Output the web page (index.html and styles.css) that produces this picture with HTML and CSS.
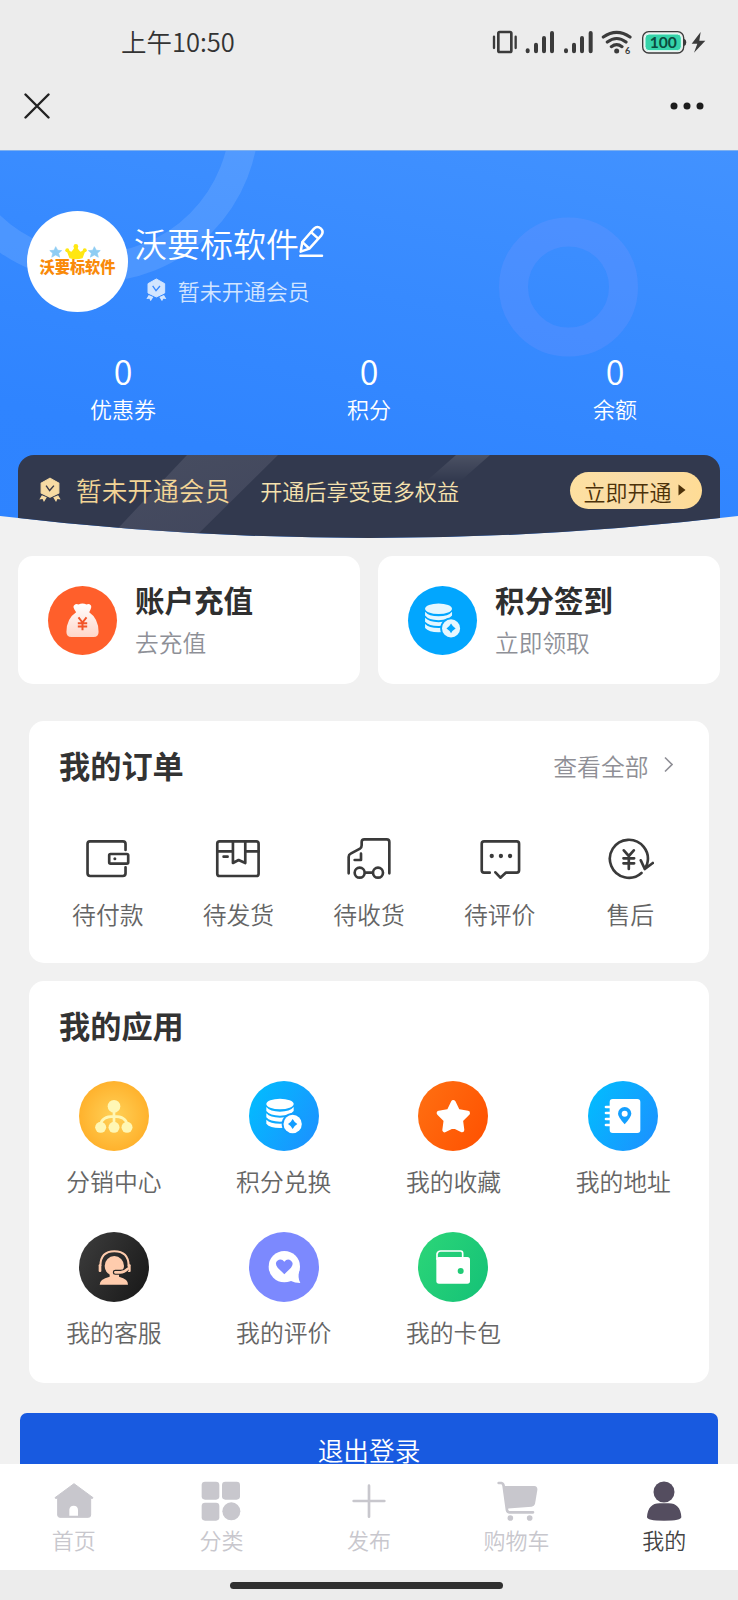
FILE: index.html
```html
<!DOCTYPE html>
<html lang="zh-CN">
<head>
<meta charset="utf-8">
<title>我的</title>
<link rel="stylesheet" href="styles.css">
</head>
<body>
<svg class="defs" width="0" height="0">
  <symbol id="badge" viewBox="436 388 62 70">
    <path fill="currentColor" stroke="currentColor" stroke-width="3" stroke-linejoin="round" d="M467 391L492 405V433L467 445L442 433V405Z"/>
    <path fill="currentColor" d="M444 439L437 451L446 450L450 458L458 445ZM490 439L497 451L488 450L484 458L476 445Z"/>
    <path class="badge-check" d="M456 412L466 426L478 412"/>
  </symbol>
  <symbol id="coins" viewBox="687 333 210 210">
    <g fill="currentColor">
      <ellipse cx="780" cy="402" rx="41" ry="16"/>
      <path d="M739 411Q750 425 780 425Q810 425 821 411V423Q810 437 780 437Q750 437 739 423Z"/>
      <path d="M739 430Q750 443 780 443Q810 443 821 430V442Q810 455 780 455Q750 455 739 442Z"/>
      <path d="M739 449Q750 461 780 461Q810 461 821 449V461Q810 474 780 474Q750 474 739 461Z"/>
    </g>
    <circle class="coin-gap" cx="818" cy="462" r="33"/>
    <circle cx="818" cy="462" r="27.500" fill="currentColor"/>
    <path class="coin-gap" d="M818 447Q823 457 832 462Q823 467 818 477Q813 467 804 462Q813 457 818 447Z"/>
  </symbol>
</svg>

<div class="screen">
  <div class="status-bar">
    <span class="time">上午10:50</span>
    <svg class="status-icons" width="220" height="28" viewBox="30 24 660 84">
      <g fill="none" stroke="#3b3b3b" stroke-linecap="round">
        <rect x="55" y="36" width="39" height="60" rx="4" stroke-width="8"/>
        <path stroke-width="7" d="M42 50V84M107 50V84"/>
        <path stroke-width="12" d="M143 91V94M168 74V94M192 54V94M216 39V94M258 91V94M282 74V94M306 54V94M332 39V94"/>
        <path stroke-width="9.500" d="M370 51Q410 23 450 51M382 66Q410 45 438 66M394 80Q410 68 426 80"/>
        <rect x="488" y="35" width="123" height="64" rx="18" stroke-width="4"/>
      </g>
      <circle cx="410" cy="93" r="7.500" fill="#3b3b3b"/>
      <text class="wifi-gen" x="443" y="102">6</text>
      <path fill="#3b3b3b" d="M612 56Q619 58 619 67Q619 76 612 78ZM662 36L635 71H652L642 98L676 62H658Z"/>
      <rect x="495" y="42" width="109" height="50" rx="12" fill="#35d3a9" stroke="#e3fff7" stroke-width="3"/>
      <text class="battery-text" x="550" y="84">100</text>
    </svg>
  </div>
  <div class="title-bar">
    <svg width="26" height="26" viewBox="0 0 26 26"><path fill="none" stroke="#222" stroke-width="2.400" stroke-linecap="round" d="M1.500 1.500L24.500 24.500M24.500 1.500L1.500 24.500"/></svg>
    <svg width="34" height="8" viewBox="0 0 34 8" fill="#1c1c1c"><circle cx="4" cy="4" r="3.500"/><circle cx="17" cy="4" r="3.500"/><circle cx="30" cy="4" r="3.500"/></svg>
  </div>

  <main class="content">
    <section class="hero">
      <svg class="hero-rings" width="738" height="388" viewBox="0 0 738 388" fill="none">
        <circle cx="94" cy="-34" r="150.500" stroke="#fff" stroke-opacity=".11" stroke-width="29"/>
        <circle cx="568.500" cy="136" r="55" stroke="#8a9cff" stroke-opacity=".2" stroke-width="29"/>
      </svg>
      <div class="profile">
        <div class="avatar">
          <svg width="101" height="101" viewBox="81 181 306 306">
            <g fill="#8fcdf3" stroke="#8fcdf3" stroke-width="2" stroke-linejoin="round">
              <path d="M168 289L174 300L186 301L177 309L180 321L168 314L156 321L159 309L150 301L163 300Z"/>
              <path d="M285 289L291 300L303 301L294 309L297 321L285 314L273 321L276 309L267 301L280 300Z"/>
            </g>
            <path fill="#ffe712" stroke="#ffe712" stroke-width="4" stroke-linejoin="round" d="M203 301L216 307L225 296V289H233V296L242 307L256 301L248 322Q229 328 211 322Z"/>
            <circle cx="229" cy="288" r="7" fill="#ffe712"/><circle cx="203" cy="300" r="6" fill="#ffe712"/><circle cx="256" cy="300" r="6" fill="#ffe712"/>
            <text class="logo-text" x="234" y="370" textLength="230" lengthAdjust="spacingAndGlyphs">沃要标软件</text>
          </svg>
        </div>
        <div class="profile-info">
          <div class="name-row">
            <span class="name">沃要标软件</span>
            <svg class="pencil" width="27" height="35" viewBox="895 222 81 105" fill="none" stroke="#fff" stroke-width="7.500" stroke-linecap="round" stroke-linejoin="round">
              <path d="M903 305L908 276L943 236Q953 226 964 236Q973 245 965 256L929 296Z"/>
              <path d="M935 247L955 265M909 277L927 294M902 317H967"/>
            </svg>
          </div>
          <div class="level-row">
            <svg class="badge badge-light" width="20.700" height="23.300"><use href="#badge"/></svg>
            <span>暂未开通会员</span>
          </div>
        </div>
      </div>
      <div class="stats">
        <div class="stat"><b>0</b><span>优惠券</span></div>
        <div class="stat"><b>0</b><span>积分</span></div>
        <div class="stat"><b>0</b><span>余额</span></div>
      </div>
      <div class="member-bar">
        <svg class="badge badge-gold" width="22" height="25"><use href="#badge"/></svg>
        <span class="member-title">暂未开通会员</span>
        <span class="member-desc">开通后享受更多权益</span>
        <span class="open-btn">立即开通<svg width="8" height="12" viewBox="0 0 8 12"><path fill="#4c3108" d="M0.500 0.500L7.500 6L0.500 11.500Z"/></svg></span>
      </div>
    </section>

    <section class="quick">
      <div class="quick-card">
        <div class="quick-icon red">
          <svg width="69" height="69" viewBox="143 438 206 206">
            <defs><linearGradient id="bag" x1="0" y1="0" x2="0" y2="1"><stop offset="0" stop-color="#fff"/><stop offset="1" stop-color="#ffd6c9"/></linearGradient></defs>
            <path fill="url(#bag)" d="M222 495Q226 490 234 493Q246 487 258 493Q266 490 270 495Q276 500 266 516Q294 535 294 575Q294 590 279 590H213Q198 590 198 575Q198 535 227 516Q214 500 222 495Z"/>
            <path fill="none" stroke="#f2562a" stroke-width="6" d="M234 532L246 547L258 532M246 547V570M232 549H260M232 559H260"/>
          </svg>
        </div>
        <div><h3>账户充值</h3><p>去充值</p></div>
      </div>
      <div class="quick-card">
        <div class="quick-icon blue"><svg class="coins" width="69" height="69"><use href="#coins"/></svg></div>
        <div><h3>积分签到</h3><p>立即领取</p></div>
      </div>
    </section>

    <section class="panel orders">
      <header><h2>我的订单</h2><a class="more">查看全部<svg width="9" height="17" viewBox="0 0 9 17"><path fill="none" stroke="#8f8f96" stroke-width="1.600" d="M1 1.500L8 8.500L1 15.500"/></svg></a></header>
      <div class="order-grid">
        <div class="order"><svg width="48" height="44" viewBox="191.400 381 144 132"><path d="M316 420V402Q316 394 308 394H209Q202 394 202 402V490Q202 498 210 498H308Q316 498 316 490V472"/><rect x="267" y="432" width="57" height="29" rx="4"/><circle class="dot" cx="284" cy="446" r="4.500"/></svg><span>待付款</span></div>
        <div class="order"><svg width="48" height="44" viewBox="583.200 381 144 132"><rect x="593" y="394" width="124" height="104" rx="7"/><path d="M593 424H640M677 424H717M640 396V459L657 450L677 459V396M612 440H624"/></svg><span>待发货</span></div>
        <div class="order"><svg width="48" height="44" viewBox="975 381 144 132"><path d="M986 490V441Q986 434 992 431L1020 416Q1025 413 1025 406V396Q1025 388 1033 388H1100Q1108 388 1108 396V490M1023 431V450H1004M1037 488H1057"/><circle cx="1019" cy="488" r="15"/><circle cx="1074" cy="488" r="15"/></svg><span>待收货</span></div>
        <div class="order"><svg width="48" height="44" viewBox="322.800 381 144 132"><path d="M364 488H347Q340 488 340 481V401Q340 394 347 394H445Q452 394 452 401V481Q452 488 445 488H412L396 503L381 487"/><g class="dot"><circle cx="370" cy="438" r="6.500"/><circle cx="397.500" cy="438" r="6.500"/><circle cx="425" cy="438" r="6.500"/></g></svg><span>待评价</span></div>
        <div class="order"><svg width="48" height="44" viewBox="714.600 381 144 132"><path d="M821 489A57 57 0 1 1 838 462L831 477M819 451L831 477L855 459M768 421L783 438L798 421M783 438V477M767 445H799M767 460H799"/></svg><span>售后</span></div>
      </div>
    </section>

    <section class="panel apps">
      <h2>我的应用</h2>
      <div class="app-grid">
        <div class="app"><div class="app-icon amber"><svg viewBox="178 333 210 210"><g fill="#fff7b5"><circle cx="283" cy="409" r="19"/><circle cx="243" cy="472" r="16.500"/><circle cx="283" cy="472" r="16.500"/><circle cx="322" cy="472" r="16.500"/></g><path fill="none" stroke="#fff7b5" stroke-width="8" d="M243 464Q246 439 283 439Q319 439 322 464M283 420V464"/></svg></div><span>分销中心</span></div>
        <div class="app"><div class="app-icon sky"><svg class="coins" viewBox="0 0 210 210"><use href="#coins"/></svg></div><span>积分兑换</span></div>
        <div class="app"><div class="app-icon orange"><svg viewBox="153 333 210 210"><path fill="#fff" stroke="#fff" stroke-width="14" stroke-linejoin="round" d="M259 397L272 424L302 429L281 450L285 480L259 467L233 480L237 450L216 429L246 424Z"/></svg></div><span>我的收藏</span></div>
        <div class="app"><div class="app-icon sky"><svg viewBox="662 333 210 210"><rect x="727" y="387" width="92" height="102" rx="9" fill="#fff"/><path stroke="#fff" stroke-width="8" stroke-linecap="round" d="M716 411H728M716 429H728M716 447H728M716 465H728"/><path fill="#149fff" d="M772 463Q752 440 752 431A20 20 0 0 1 792 431Q792 440 772 463Z"/><circle cx="772" cy="431" r="9" fill="#fff"/></svg></div><span>我的地址</span></div>
        <div class="app"><div class="app-icon black"><svg viewBox="178 787 210 210"><g fill="#ffccad"><ellipse cx="284" cy="889" rx="29" ry="30"/><path d="M240 945Q239 929 270 921V912H298V921Q327 929 325 945Z"/><rect x="237" y="884" width="8" height="23" rx="3"/><rect x="324" y="884" width="9" height="23" rx="3"/></g><path fill="none" stroke="#ffccad" stroke-width="6" d="M242 888Q243 845 284 845Q326 845 327 888"/><path fill="none" stroke="#262626" stroke-width="15" stroke-linecap="round" d="M287 908H302Q314 908 320 899"/><path fill="none" stroke="#ffccad" stroke-width="8" stroke-linecap="round" d="M287 908H302Q314 908 325 897"/></svg></div><span>我的客服</span></div>
        <div class="app"><div class="app-icon violet"><svg viewBox="687 787 210 210"><circle cx="793" cy="891" r="47" fill="#fff"/><path fill="#fff" d="M838 902Q832 925 841 940Q825 940 811 933Z"/><path fill="#7c89fe" d="M793 914L773 894Q763 881 772 873Q784 865 793 876Q802 865 813 873Q823 881 813 894Z"/></svg></div><span>我的评价</span></div>
        <div class="app"><div class="app-icon green"><svg viewBox="153 787 210 210"><rect x="208" y="862" width="101" height="80" rx="8" fill="#fff"/><path fill="none" stroke="#fff" stroke-width="5" d="M210 870V853Q212 844 221 844H281Q287 844 287 851V864"/><circle cx="281" cy="904" r="9" fill="#1fcb75"/></svg></div><span>我的卡包</span></div>
      </div>
    </section>

    <div class="logout">退出登录</div>
  </main>

  <nav class="tab-bar">
    <div class="tab"><svg width="42" height="42" viewBox="158 268 126 126"><path fill="currentColor" stroke="currentColor" stroke-width="3" stroke-linejoin="round" d="M221 279L278 321L277 323H271V373Q271 380 264 380H179Q172 380 172 373V323H165L164 321Z"/><path fill="#fff" d="M207 375V357Q208 345 220 345Q232 345 233 357V375Z"/></svg><span>首页</span></div>
    <div class="tab"><svg width="42" height="42" viewBox="601 268 126 126" fill="currentColor"><rect x="606" y="273" width="53" height="54" rx="10"/><rect x="667" y="273" width="54" height="54" rx="10"/><rect x="606" y="336" width="53" height="54" rx="10"/><circle cx="695" cy="362" r="27"/></svg><span>分类</span></div>
    <div class="tab"><svg width="42" height="42" viewBox="1044 268 126 126"><path stroke="currentColor" stroke-width="8" stroke-linecap="round" d="M1061 331H1153M1107 285V378"/></svg><span>发布</span></div>
    <div class="tab"><svg width="42" height="42" viewBox="382 268 126 126"><path fill="none" stroke="currentColor" stroke-width="8" stroke-linecap="round" stroke-linejoin="round" d="M390 277H398Q404 278 405 286L415 359Q416 365 423 365H493"/><path fill="currentColor" d="M403 286H497Q507 287 506 298L499 340Q497 347 489 348L413 354Z"/><g fill="currentColor"><circle cx="425" cy="382" r="8.500"/><circle cx="483" cy="382" r="8.500"/></g></svg><span>购物车</span></div>
    <div class="tab active"><svg width="42" height="42" viewBox="825 268 126 126" fill="currentColor"><circle cx="888" cy="304" r="31.500"/><path d="M837 379Q840 338 875 338H902Q937 338 940 379Q941 390 888 390Q836 390 837 379Z"/></svg><span>我的</span></div>
  </nav>
  <div class="gesture-area"><div class="gesture-pill"></div></div>
</div>
</body>
</html>
```
FILE: styles.css
```css
* { box-sizing: border-box; }
body {
  margin: 0;
  background: #f1f1f1;
  font-family: "Noto Sans CJK SC", sans-serif;
  font-weight: 350;
  color: #333;
}
h2, h3, p { margin: 0; }
svg { display: block; flex: none; }
.defs { position: absolute; }

.screen {
  width: 738px;
  height: 1600px;
  display: flex;
  flex-direction: column;
  overflow: hidden;
}

/* Status and title bars */
.status-bar {
  height: 84px;
  flex: none;
  background: #ececec;
  display: flex;
  justify-content: space-between;
  align-items: center;
  padding: 0 28px 0 121px;
}
.time { font-size: 25.500px; line-height: 36px; color: #333; margin-top: -3px; }
.wifi-gen { font: 700 27px Lato, sans-serif; fill: #3b3b3b; text-anchor: middle; }
.battery-text { font: 700 47px Lato, sans-serif; fill: #0b4b3e; text-anchor: middle; }
.title-bar {
  height: 66px;
  flex: none;
  background: #ececec;
  display: flex;
  justify-content: space-between;
  align-items: center;
  padding: 0 34px 22px 24px;
}

.content {
  height: 1313.500px;
  flex: none;
  overflow: hidden;
}

/* Blue profile header with curved lower edge */
.hero {
  position: relative;
  height: 388px;
  border-top: 1px solid #7eb0ef;
  padding-top: 60px;
  background: linear-gradient(192deg, #4292ff 0%, #378aff 40%, #2f84ff 75%, #2e83ff 100%);
  clip-path: path("M0 0H738V366Q369 410 0 366Z");
}
.hero-rings { position: absolute; left: 0; top: 0; }
.profile { position: relative; display: flex; padding-left: 27px; height: 101px; }
.avatar {
  width: 101px;
  height: 101px;
  border-radius: 50%;
  background: #fff;
  overflow: hidden;
  flex: none;
}
.logo-text {
  font-size: 47px;
  font-weight: 900;
  fill: #f98a09;
  text-anchor: middle;
}
.profile-info { padding: 12px 0 0 6px; color: #fff; }
.name-row { display: flex; height: 40px; }
.name { font-size: 33px; line-height: 40px; }
.pencil { margin: 1px 0 0 -1px; }
.level-row {
  display: flex;
  align-items: center;
  gap: 11px;
  margin-top: 12px;
  padding-left: 12px;
  font-size: 22px;
  line-height: 30px;
  color: #d2e5ff;
}
.badge-check { fill: none; stroke: var(--check); stroke-width: 4; }
.badge-light { color: #d2e5ff; --check: #3a8aff; }
.badge-gold { color: #f7dba3; --check: #3b3a48; }

.stats {
  position: relative;
  display: grid;
  grid-template-columns: repeat(3, 1fr);
  margin-top: 39px;
  color: #fff;
}
.stat { display: flex; flex-direction: column; align-items: center; gap: 2px; }
.stat b { font-size: 34px; line-height: 40px; font-weight: 350; }
.stat span { font-size: 22px; line-height: 30px; }

.member-bar {
  position: relative;
  margin: 32px 18px 0;
  height: 90px;
  padding: 17px 18.500px 0 21px;
  border-radius: 16px 16px 0 0;
  display: flex;
  align-items: flex-start;
  background: #32394e;
}
.member-bar::before {
  content: "";
  position: absolute;
  inset: 0;
  background: linear-gradient(160deg, rgba(255, 255, 255, .11), rgba(150, 120, 200, .08));
  clip-path: polygon(169px 0, 260px 0, 175px 84px, 90px 84px);
}
.member-bar::after {
  content: "";
  position: absolute;
  inset: 0;
  background: linear-gradient(rgba(255, 255, 255, .12), transparent 26px);
  clip-path: polygon(438px 0, 472px 0, 438px 30px, 404px 30px);
}
.member-bar > * { position: relative; z-index: 1; }
.badge-gold { margin-top: 5px; }
.member-title { font-size: 25.700px; line-height: 37px; margin-left: 15px; margin-top: -1px; color: #f3d596; }
.member-desc { font-size: 22.100px; line-height: 37px; margin-left: 30px; color: #f6e2ae; }
.open-btn {
  margin-left: auto;
  width: 131.500px;
  height: 37px;
  border-radius: 19px;
  display: flex;
  align-items: center;
  gap: 6px;
  padding-left: 13.500px;
  background: linear-gradient(90deg, #fee0a0, #f8dca9 50%, #ffdc95);
  font-size: 22px;
  line-height: 34px;
  color: #4c3108;
}
.open-btn svg { margin-top: -1px; }

/* Two shortcut cards */
.quick {
  display: grid;
  grid-template-columns: 1fr 1fr;
  gap: 18px;
  padding: 0 18px;
  margin-top: 18px;
}
.quick-card {
  height: 128px;
  border-radius: 15px;
  background: #fff;
  display: flex;
  padding: 29.500px 0 0 29.500px;
}
.quick-card > div:last-child { margin: -6.500px 0 0 18.500px; }
.quick-icon { width: 69px; height: 69px; border-radius: 50%; }
.quick-icon.red { background: #ff5f2b; }
.quick-icon.blue { background: #02a6fe; --gap: #02a6fe; }
.quick-icon .coins { color: #e6f7ff; }
.coins { color: #fff; }
.coin-gap { fill: var(--gap); }
.quick-card h3 { font-size: 29.500px; line-height: 40px; font-weight: 700; color: #2f2f2f; }
.quick-card p { font-size: 23.700px; line-height: 32px; margin-top: 7px; color: #8e9097; }

/* White panels */
.panel { margin: 0 29px; background: #fff; border-radius: 15px; }
.panel h2 { font-size: 31.200px; line-height: 44px; font-weight: 700; color: #333; }
.orders { margin-top: 37px; height: 242px; padding: 22px 13.500px 0; }
.orders header { display: flex; justify-content: space-between; padding: 0 23px 0 16.500px; }
.more {
  display: flex;
  gap: 15px;
  font-size: 23.800px;
  line-height: 46px;
  color: #8f8f96;
}
.more svg { margin-top: 13px; }
.order-grid { display: grid; grid-template-columns: repeat(5, 1fr); margin-top: 48px; }
.order { display: flex; flex-direction: column; align-items: center; font-size: 23.800px; line-height: 32px; color: #656565; gap: 17px; }
.order svg {
  fill: none;
  stroke: #3a3a3a;
  stroke-width: 8;
  stroke-linecap: round;
  stroke-linejoin: round;
}
.order .dot { fill: #3a3a3a; stroke: none; }

.apps { margin-top: 18px; height: 402px; padding-top: 22px; }
.apps h2 { padding-left: 30px; }
.app-grid { display: grid; grid-template-columns: repeat(4, 169.800px); margin-top: 34px; row-gap: 35.500px; }
.app { display: flex; flex-direction: column; align-items: center; gap: 13.500px; font-size: 23.800px; line-height: 32px; color: #656565; }
.app-icon { width: 70px; height: 70px; border-radius: 50%; }
.app-icon svg { width: 70px; height: 70px; }
.amber { background: radial-gradient(circle, #ffd158, #ffb02a 75%); }
.sky { background: linear-gradient(120deg, #00bffe, #1e8eff); --gap: #139dff; }
.orange { background: linear-gradient(120deg, #ff7012, #ff5000); }
.black { background: linear-gradient(120deg, #3d3d3d, #171717); }
.violet { background: #7c89fe; }
.green { background: linear-gradient(120deg, #2cd678, #14c177); }

.logout {
  margin: 30px 20px 0;
  height: 80px;
  border-radius: 7px;
  background: #185ae0;
  color: #fff;
  font-size: 25.700px;
  line-height: 73px;
  text-align: center;
}

/* Bottom navigation */
.tab-bar {
  height: 106.500px;
  flex: none;
  background: #fff;
  display: grid;
  grid-template-columns: repeat(5, 1fr);
}
.tab { display: flex; flex-direction: column; align-items: center; padding-top: 16px; color: #c8c7cd; }
.tab span { font-size: 22px; line-height: 30px; margin-top: 2px; }
.tab.active { color: #544d5f; }
.tab.active span { color: #444; }
.gesture-area { height: 30px; flex: none; background: #ececec; padding: 11.500px 0 0 230px; }
.gesture-pill { width: 273px; height: 7.500px; border-radius: 4px; background: #303030; }
```
